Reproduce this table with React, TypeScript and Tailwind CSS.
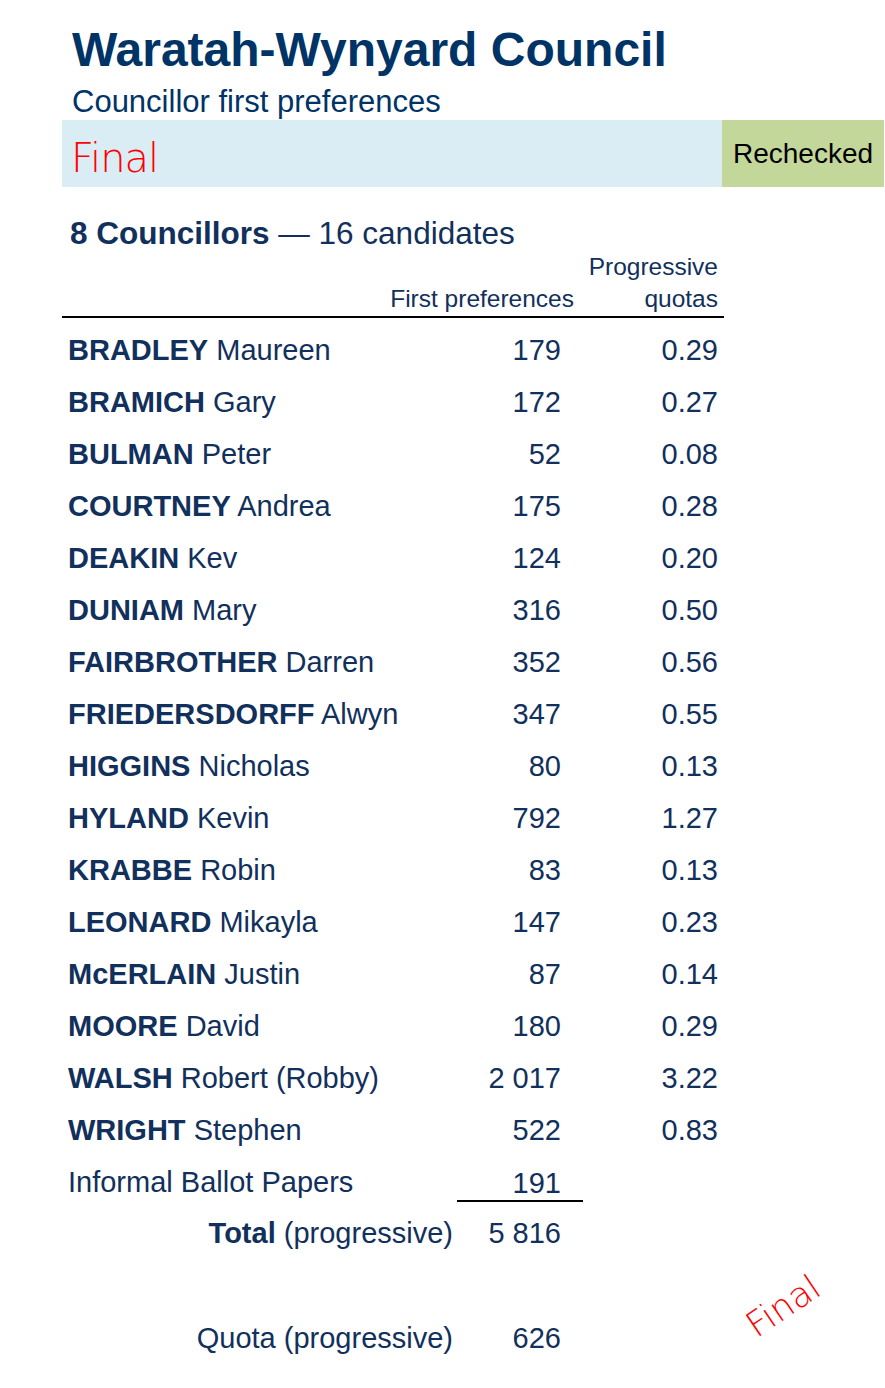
const rows = [
  { last: 'BRADLEY', first: 'Maureen', votes: '179', quota: '0.29' },
  { last: 'BRAMICH', first: 'Gary', votes: '172', quota: '0.27' },
  { last: 'BULMAN', first: 'Peter', votes: '52', quota: '0.08' },
  { last: 'COURTNEY', first: 'Andrea', votes: '175', quota: '0.28' },
  { last: 'DEAKIN', first: 'Kev', votes: '124', quota: '0.20' },
  { last: 'DUNIAM', first: 'Mary', votes: '316', quota: '0.50' },
  { last: 'FAIRBROTHER', first: 'Darren', votes: '352', quota: '0.56' },
  { last: 'FRIEDERSDORFF', first: 'Alwyn', votes: '347', quota: '0.55' },
  { last: 'HIGGINS', first: 'Nicholas', votes: '80', quota: '0.13' },
  { last: 'HYLAND', first: 'Kevin', votes: '792', quota: '1.27' },
  { last: 'KRABBE', first: 'Robin', votes: '83', quota: '0.13' },
  { last: 'LEONARD', first: 'Mikayla', votes: '147', quota: '0.23' },
  { last: 'McERLAIN', first: 'Justin', votes: '87', quota: '0.14' },
  { last: 'MOORE', first: 'David', votes: '180', quota: '0.29' },
  { last: 'WALSH', first: 'Robert (Robby)', votes: '2 017', quota: '3.22' },
  { last: 'WRIGHT', first: 'Stephen', votes: '522', quota: '0.83' },
];

export default function App() {
  return (
    <div className="w-[885px] h-[1388px] bg-white text-[#11305c] font-['Liberation_Sans',Arial,sans-serif] overflow-hidden">
      {/* Heading */}
      <div className="pl-[72px] pt-[22px]">
        <h1 className="text-[48px] leading-[56px] font-bold text-[#003366]">Waratah-Wynyard Council</h1>
        <p className="text-[31px] leading-[42px] text-[#003366] pt-[3px]">Councillor first preferences</p>
      </div>

      {/* Status band */}
      <div className="flex ml-[62px] h-[67px] -mt-[3px]">
        <div className="w-[660px] bg-[#daedf4] flex items-center pl-[9px] pt-[9px]">
          <span className="text-[40px] leading-none text-[#ff0000] font-['DejaVu_Sans',sans-serif] font-extralight tracking-[-1px]">Final</span>
        </div>
        <div className="w-[162px] bg-[#c4d79b] flex items-center justify-center">
          <span className="text-[28px] leading-none text-black">Rechecked</span>
        </div>
      </div>

      {/* Summary */}
      <div className="pl-[70px] mt-[28px] text-[31.5px] leading-[36px]">
        <span className="font-bold">8 Councillors</span> — 16 candidates
      </div>

      {/* Column headers */}
      <div className="flex pl-[62px] text-[24.5px] leading-[32px]">
        <div className="w-[513px] pt-[32px] text-right pr-[1px]">First preferences</div>
        <div className="w-[143px] text-right">
          <div>Progressive</div>
          <div>quotas</div>
        </div>
      </div>
      <div className="ml-[62px] w-[662px] h-[2px] bg-black mt-[1px]" />

      {/* Candidate rows */}
      <div className="pl-[68px] mt-[7px] text-[29px]">
        {rows.map((r) => (
          <div key={r.last} className="grid grid-cols-[400px_93px_157px] h-[52px] items-center">
            <div>
              <span className="font-bold">{r.last}</span> {r.first}
            </div>
            <div className="text-right">{r.votes}</div>
            <div className="text-right">{r.quota}</div>
          </div>
        ))}

        <div className="flex h-[52px] items-center">
          <div className="w-[389px]">Informal Ballot Papers</div>
          <div className="w-[126px] text-right pr-[22px] border-b-2 border-black leading-[34px] mt-[2px]">191</div>
        </div>
        <div className="flex h-[50px] items-center">
          <div className="w-[385px] text-right">
            <span className="font-bold">Total</span> (progressive)
          </div>
          <div className="w-[108px] text-right">5 816</div>
        </div>

        <div className="flex h-[52px] items-center mt-[54px] relative">
          <div className="w-[385px] text-right">Quota (progressive)</div>
          <div className="w-[108px] text-right">626</div>
          <span className="absolute left-[675px] top-[-33px] -rotate-[34deg] text-[35px] text-[#ff0000] font-['DejaVu_Sans',sans-serif] font-extralight">
            Final
          </span>
        </div>
      </div>
    </div>
  );
}
